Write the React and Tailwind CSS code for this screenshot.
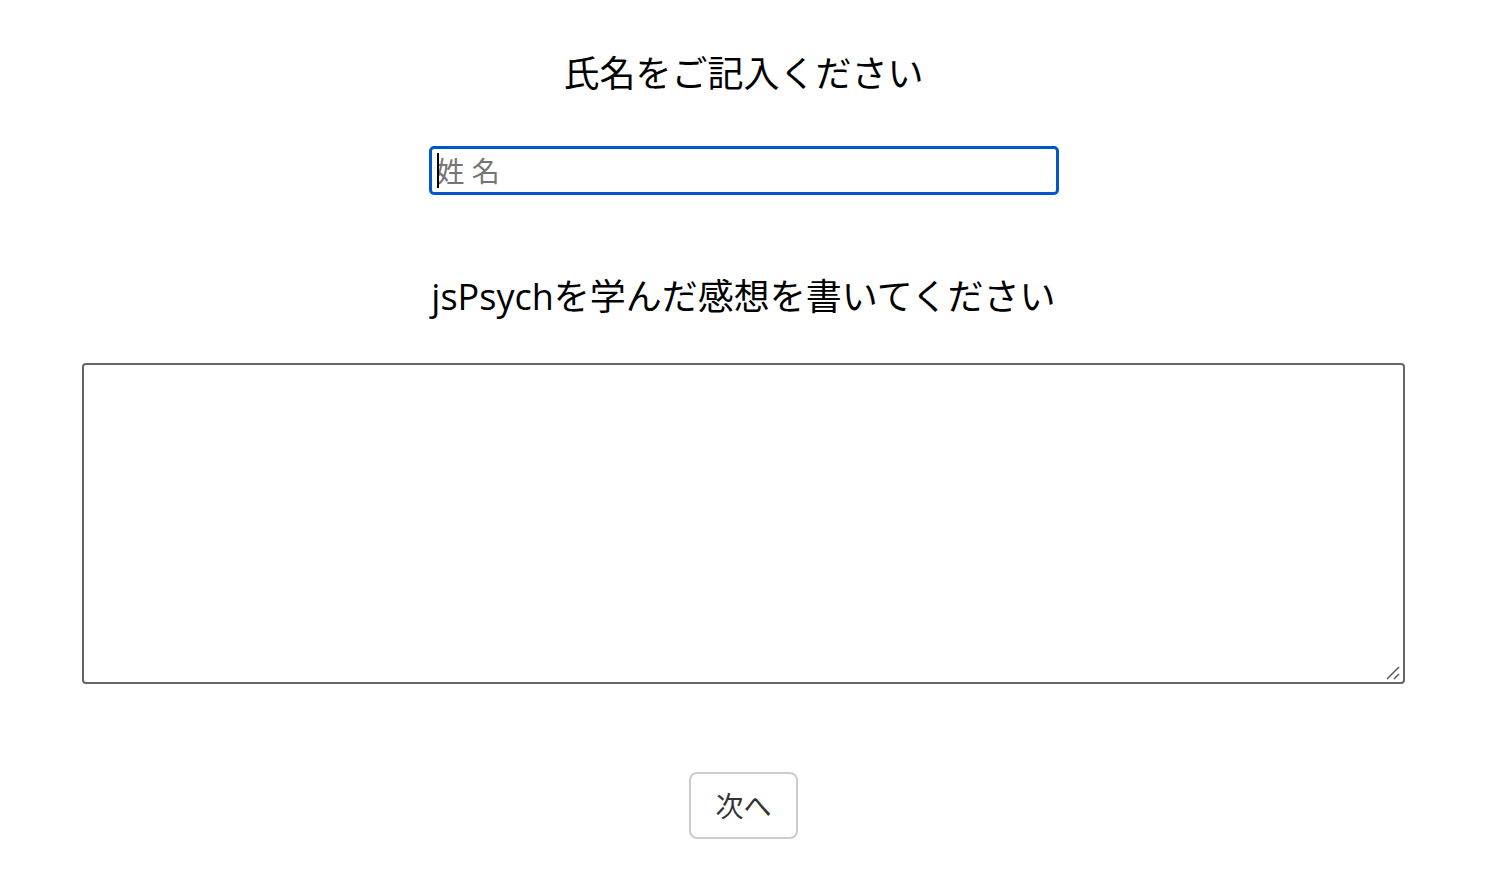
import React from "react";

export default function App() {
  const font = { fontFamily: '"Open Sans", "Noto Sans CJK JP", sans-serif' };
  return (
    <div className="min-h-[874px] w-full bg-white text-black" style={font}>
      <div className="flex flex-col items-center pt-[45px] pr-[1px]">
        <p className="text-[36px] leading-[58px] m-0">氏名をご記入ください</p>
        <div className="relative mt-[43px]">
          <input
            type="text"
            placeholder="姓 名"
            className="w-[630px] h-[49px] border-[3px] border-[#0058c8] rounded-[5px] pl-[5px] text-[28px] text-black placeholder:text-[#757575] outline-none bg-white"
            style={font}
          />
          <span className="absolute left-[8px] top-[7px] w-[2px] h-[35px] bg-black" />
        </div>
        <p className="text-[36px] leading-[58px] m-0 mt-[73px]">jsPsychを学んだ感想を書いてください</p>
        <div className="relative mt-[37px]">
          <textarea
            className="block w-[1323px] h-[321px] border-2 border-[#666666] rounded-[4px] bg-white resize-none"
            style={font}
          />
          <svg
            className="absolute right-[4px] bottom-[3px]"
            width="16"
            height="16"
            viewBox="0 0 16 16"
          >
            <line x1="2" y1="14" x2="14" y2="2" stroke="#555555" strokeWidth="1.5" />
            <line x1="9" y1="14" x2="14" y2="9" stroke="#555555" strokeWidth="1.5" />
          </svg>
        </div>
        <button
          className="mt-[88px] w-[109px] h-[67px] border-2 border-[#cccccc] rounded-[8px] bg-white text-[28px] text-[#333333]"
          style={font}
        >
          次へ
        </button>
      </div>
    </div>
  );
}
